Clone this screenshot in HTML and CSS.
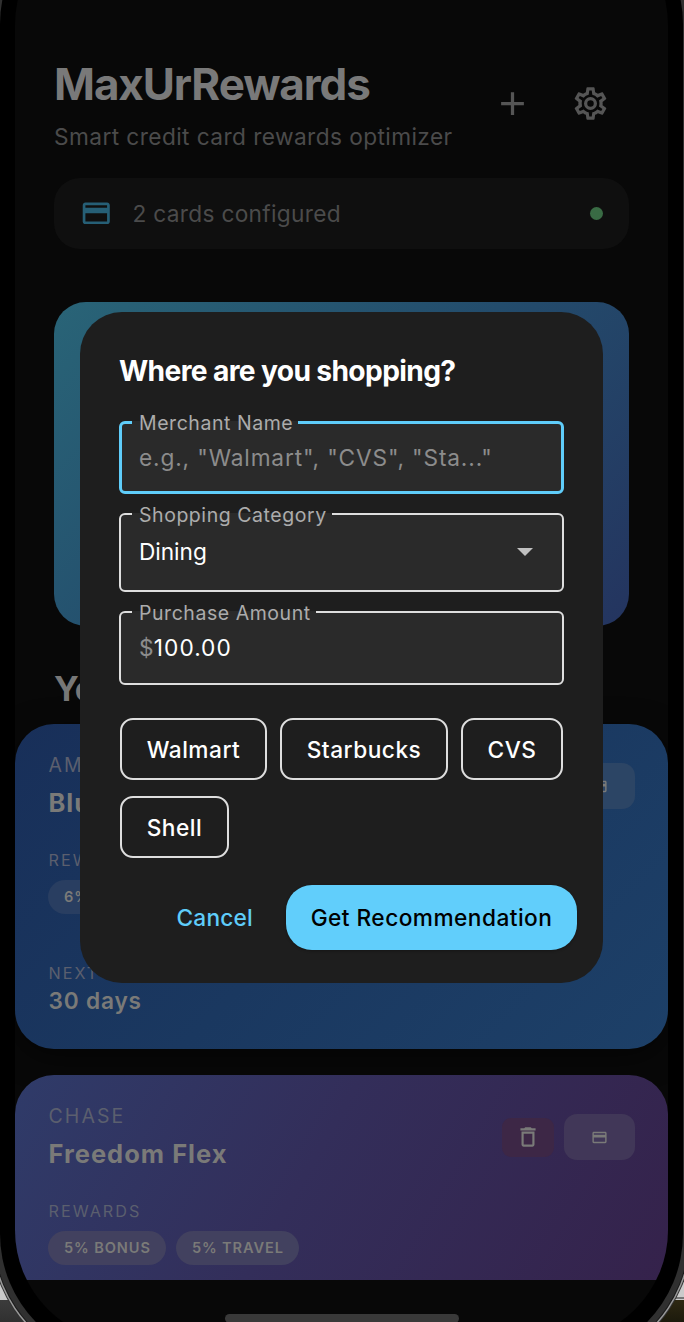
FILE: index.html
```html
<!DOCTYPE html>
<html lang="en">
<head>
<meta charset="utf-8">
<title>MaxUrRewards</title>
<link rel="stylesheet" href="styles.css">
</head>
<body>
<svg class="defs" aria-hidden="true">
  <symbol id="card-icon" viewBox="0 0 24 24"><path d="M20 4H4c-1.11 0-1.99.89-1.99 2L2 18c0 1.11.89 2 2 2h16c1.11 0 2-.89 2-2V6c0-1.11-.89-2-2-2zm0 14H4v-6h16v6zm0-10H4V6h16v2z"/></symbol>
  <symbol id="plus-icon" viewBox="0 0 24 24"><path d="M19 13h-6v6h-2v-6H5v-2h6V5h2v6h6z"/></symbol>
  <symbol id="cog-icon" viewBox="0 0 24 24"><path d="M12 8a4 4 0 0 1 4 4 4 4 0 0 1-4 4 4 4 0 0 1-4-4 4 4 0 0 1 4-4m0 2a2 2 0 0 0-2 2 2 2 0 0 0 2 2 2 2 0 0 0 2-2 2 2 0 0 0-2-2m-2 12c-.25 0-.46-.18-.5-.42l-.37-2.65c-.63-.25-1.17-.59-1.69-.99l-2.49 1.01c-.22.08-.49 0-.61-.22l-2-3.46c-.13-.22-.07-.49.12-.64l2.11-1.66L4.500 12l.07-1-2.110-1.630c-.19-.15-.25-.42-.12-.64l2-3.460c.12-.22.39-.31.61-.22l2.490 1c.52-.39 1.060-.73 1.690-.98l.37-2.650c.04-.24.25-.42.5-.42h4c.25 0 .46.18.5.42l.37 2.650c.63.25 1.170.59 1.690.98l2.490-1c.22-.09.49 0 .61.22l2 3.460c.13.22.07.49-.12.64L19.430 11l.07 1-.07 1 2.110 1.630c.19.15.25.42.12.64l-2 3.460c-.12.22-.39.31-.61.22l-2.490-1c-.52.39-1.060.73-1.690.98l-.37 2.650c-.04.24-.25.42-.5.42h-4m1.250-18-.37 2.610c-1.200.25-2.260.89-3.030 1.780L5.440 7.350l-.75 1.300L6.800 10.200a6.550 6.550 0 0 0 0 3.600l-2.120 1.560.75 1.300 2.430-1.040c.77.88 1.820 1.520 3.010 1.760l.37 2.620h1.520l.37-2.610c1.190-.25 2.240-.89 3.010-1.770l2.430 1.040.75-1.300-2.120-1.550c.4-1.170.4-2.440 0-3.610l2.110-1.550-.75-1.300-2.410 1.040a5.420 5.420 0 0 0-3.030-1.770L12.750 4h-1.500z"/></symbol>
  <symbol id="trash-icon" viewBox="0 0 24 24"><path d="M6 19c0 1.1.9 2 2 2h8c1.100 0 2-.9 2-2V7H6v12zM8 9h8v10H8V9zm7.500-5l-1-1h-5l-1 1H5v2h14V4z"/></symbol>
</svg>
<div class="phone">
  <main class="screen">
    <header class="header">
      <div>
        <h1 class="app-title">MaxUrRewards</h1>
        <p class="tagline">Smart credit card rewards optimizer</p>
      </div>
      <div class="header-actions">
        <svg class="action-icon"><use href="#plus-icon"/></svg>
        <svg class="action-icon"><use href="#cog-icon"/></svg>
      </div>
    </header>
    <div class="status">
      <svg class="status-icon"><use href="#card-icon"/></svg>
      <span class="status-text">2 cards configured</span>
      <span class="status-dot"></span>
    </div>
    <div class="hero"></div>
    <h2 class="section-title">Your Cards</h2>
    <section class="card card-blue">
      <div class="card-head">
        <div>
          <div class="issuer">AMEX</div>
          <div class="card-name">Blue Cash</div>
        </div>
        <div class="card-actions">
          <span class="flip"><svg class="flip-icon"><use href="#card-icon"/></svg></span>
        </div>
      </div>
      <div class="caption">REWARDS</div>
      <div class="tags"><span class="tag">6% GROCERY</span></div>
      <div class="caption next">NEXT BILL</div>
      <div class="days">30 days</div>
    </section>
    <section class="card card-purple">
      <div class="card-head">
        <div>
          <div class="issuer">CHASE</div>
          <div class="card-name">Freedom Flex</div>
        </div>
        <div class="card-actions">
          <span class="delete"><svg class="delete-icon"><use href="#trash-icon"/></svg></span>
          <span class="flip"><svg class="flip-icon"><use href="#card-icon"/></svg></span>
        </div>
      </div>
      <div class="caption">REWARDS</div>
      <div class="tags"><span class="tag">5% BONUS</span><span class="tag">5% TRAVEL</span></div>
    </section>
    <div class="home-bar"></div>
  </main>
</div>
<div class="dialog" role="dialog">
  <h2 class="dialog-title">Where are you shopping?</h2>
  <fieldset class="field field-focus">
    <legend class="label">Merchant Name</legend>
    <div class="placeholder">e.g., "Walmart", "CVS", "Sta..."</div>
  </fieldset>
  <fieldset class="field field-select">
    <legend class="label">Shopping Category</legend>
    <div class="select-value"><span>Dining</span><svg class="caret" viewBox="0 0 16 8"><path d="M0 0h16L8 8z"/></svg></div>
  </fieldset>
  <fieldset class="field field-amount">
    <legend class="label">Purchase Amount</legend>
    <div class="amount"><span class="currency">$</span>100.00</div>
  </fieldset>
  <div class="chips">
    <span class="chip chip-walmart">Walmart</span>
    <span class="chip chip-starbucks">Starbucks</span>
    <span class="chip chip-cvs">CVS</span>
    <span class="chip chip-shell">Shell</span>
  </div>
  <div class="buttons">
    <span class="cancel">Cancel</span>
    <span class="submit">Get Recommendation</span>
  </div>
</div>
</body>
</html>
```
FILE: styles.css
```css
* { box-sizing: border-box; }

body {
  position: relative;
  display: flex;
  align-items: flex-start;
  width: 684px;
  height: 1322px;
  margin: 0;
  overflow: hidden;
  font-family: Inter, "Liberation Sans", sans-serif;
  background:
    linear-gradient(#3c3c3c, #303030) 0 1300px / 342px 22px no-repeat,
    linear-gradient(#2e2812, #1c1a0c) 342px 1300px / 342px 22px no-repeat,
    linear-gradient(#777, #777) 342px 1297px / 342px 2px no-repeat,
    #cbcbcb;
}

h1, h2, p { margin: 0; }
svg { flex: none; fill: currentColor; }
.defs { position: absolute; width: 0; height: 0; }

/* Device frame */
.phone {
  flex: none;
  width: 683px;
  height: 1462px;
  margin-top: -102px;
  padding: 15px 15px 18px;
  border-radius: 126px;
  background: #000;
  box-shadow: 0 0 0 6px #303030, 0 0 0 7px #1b1b1b, 0 0 0 8.500px #9a9a9a, 0 0 0 9.500px #333;
}
.screen {
  width: 653px;
  height: 1429px;
  padding-top: 144px;
  border-radius: 112px;
  overflow: hidden;
  background: #080808;
}

/* Header */
.header {
  display: flex;
  justify-content: space-between;
  margin: 0 58.500px 0 39px;
}
.app-title {
  font-size: 44px;
  line-height: 54px;
  letter-spacing: -1.100px;
  color: #797979;
}
.tagline {
  margin-top: 10px;
  font-size: 22.700px;
  line-height: 32px;
  letter-spacing: .41px;
  white-space: nowrap;
  color: #4b4b4b;
}
.header-actions {
  display: flex;
  gap: 39px;
  padding-top: 27px;
  color: #555;
}
.action-icon { width: 39px; height: 39px; }

.status {
  display: flex;
  align-items: center;
  height: 71px;
  margin: 25px 39px 0;
  padding: 0 26px;
  border-radius: 26px;
  background: #0f0f0f;
}
.status-icon { width: 32.500px; height: 32.500px; color: #265f76; }
.status-text {
  flex: 1;
  margin-left: 20px;
  font-size: 22.700px;
  letter-spacing: .3px;
  color: #4b4b4b;
}
.status-dot {
  width: 13px;
  height: 13px;
  border-radius: 50%;
  background: #396b44;
}

.hero {
  height: 324px;
  margin: 53px 39px 0;
  border-radius: 32px;
  background: linear-gradient(135deg, #296477, #234c6c 50%, #24345f);
}
.section-title {
  margin: 39px 39px 0;
  font-size: 34px;
  line-height: 48px;
  letter-spacing: -.5px;
  color: #777;
}

/* Reward cards */
.card {
  height: 325px;
  padding: 28.500px 33px 0 33.500px;
  border-radius: 39px;
  color: #7a7a78;
}
.card-blue {
  margin-top: 11px;
  background: linear-gradient(135deg, #182f59, #1a3860 50%, #1d4068);
  box-shadow: 0 8px 30px rgba(0, 0, 0, .5);
}
.card-purple {
  height: 205px;
  margin-top: 26px;
  border-radius: 39px 39px 0 0;
  background: linear-gradient(120deg, #2f3b69, #332e5a 45%, #35224b);
}
.card-head { display: flex; justify-content: space-between; }
.issuer {
  font-size: 19.500px;
  line-height: 24px;
  letter-spacing: 2.100px;
  color: #5b5f6e;
}
.card-name {
  margin-top: 9px;
  font-size: 25.500px;
  font-weight: 700;
  line-height: 34px;
  letter-spacing: 1px;
}
.card-actions { display: flex; gap: 10px; align-items: center; }
.delete, .flip { display: flex; align-items: center; justify-content: center; }
.delete { width: 52px; height: 39px; border-radius: 9px; background: #3d2746; }
.delete-icon { width: 26px; height: 26px; }
.flip { width: 71.500px; height: 46px; border-radius: 13px; background: #413758; }
.card-blue .flip { background: #2c4565; }
.flip-icon { width: 17px; height: 17px; }
.caption {
  margin-top: 30px;
  font-size: 16.200px;
  line-height: 20px;
  letter-spacing: 2px;
  color: #5b5f6e;
}
.tags { display: flex; gap: 10px; margin: 10px 0 0 -.5px; }
.tag {
  height: 34px;
  padding: 0 15px 0 16px;
  border-radius: 17px;
  background: #42415f;
  font-size: 14.600px;
  font-weight: 600;
  line-height: 35px;
  letter-spacing: .9px;
}
.card-blue .tag { background: #293e61; }
.next { margin-top: 49.500px; }
.days {
  margin-top: 4px;
  font-size: 22.700px;
  font-weight: 600;
  line-height: 28px;
  letter-spacing: .8px;
}
.home-bar {
  width: 234px;
  height: 9px;
  margin: 34px auto 0 210px;
  border-radius: 5px;
  background: #393939;
}

/* Dialog floats over the app */
.dialog {
  position: absolute;
  top: 312px;
  left: 80px;
  width: 523px;
  height: 671px;
  padding: 41px 39px 0;
  border-radius: 42px;
  background: #1e1e1e;
  color: #fff;
}
.dialog-title {
  font-size: 28.200px;
  line-height: 36px;
  letter-spacing: -.65px;
}
.field {
  min-width: 0;
  margin: 8px 0 0;
  padding: 0 16px;
  border: 2px solid #dedede;
  border-radius: 6px;
  background: #2a2a2a;
  font-size: 22.700px;
}
.label {
  margin-left: -5px;
  padding: 0 5px 0 7px;
  font-size: 19.500px;
  line-height: 24px;
  letter-spacing: .55px;
  color: #acacac;
}
.field-focus {
  height: 84px;
  margin-top: 21px;
  border: 3px solid #5fcdfa;
}
.field-focus .label { margin-left: -6px; padding-top: 1px; }
.placeholder { line-height: 32px; letter-spacing: .85px; color: #8c8c8c; }
.field-focus .placeholder { margin: 7px 0 0 1px; }
.field-select { height: 90px; }
.field-select .label { padding-top: 3px; line-height: 21px; }
.select-value {
  display: flex;
  align-items: center;
  justify-content: space-between;
  margin: 10px 13px 0 2px;
  line-height: 32px;
  letter-spacing: -.05px;
}
.caret { width: 16px; height: 8px; color: #c0c0c0; }
.field-amount { height: 85px; }
.field-amount .label { padding-top: 2px; line-height: 22px; }
.amount { margin: 8px 0 0 2px; line-height: 32px; letter-spacing: 1px; }
.currency { color: #8c8c8c; letter-spacing: .3px; }

.chips {
  display: flex;
  flex-wrap: wrap;
  gap: 16px 13px;
  margin-top: 33px;
  margin-left: 1px;
}
.chip {
  height: 62px;
  border: 2px solid #dedede;
  border-radius: 13px;
  font-size: 22.700px;
  font-weight: 450;
  line-height: 60px;
  letter-spacing: .5px;
  text-align: center;
}
.chip-walmart { width: 147px; }
.chip-starbucks { width: 168px; }
.chip-cvs { width: 102px; }
.chip-shell { width: 109px; }

.buttons {
  display: flex;
  align-items: center;
  justify-content: flex-end;
  gap: 33px;
  margin: 27px -13px 0 0;
  font-size: 22.700px;
  font-weight: 450;
}
.cancel { letter-spacing: .2px; color: #5fcdfa; }
.submit {
  width: 291px;
  height: 65px;
  border-radius: 26px;
  background: #61cefb;
  box-shadow: 0 1px 3px rgba(0, 0, 0, .3);
  line-height: 66px;
  letter-spacing: .45px;
  text-align: center;
  color: #000;
}
```
